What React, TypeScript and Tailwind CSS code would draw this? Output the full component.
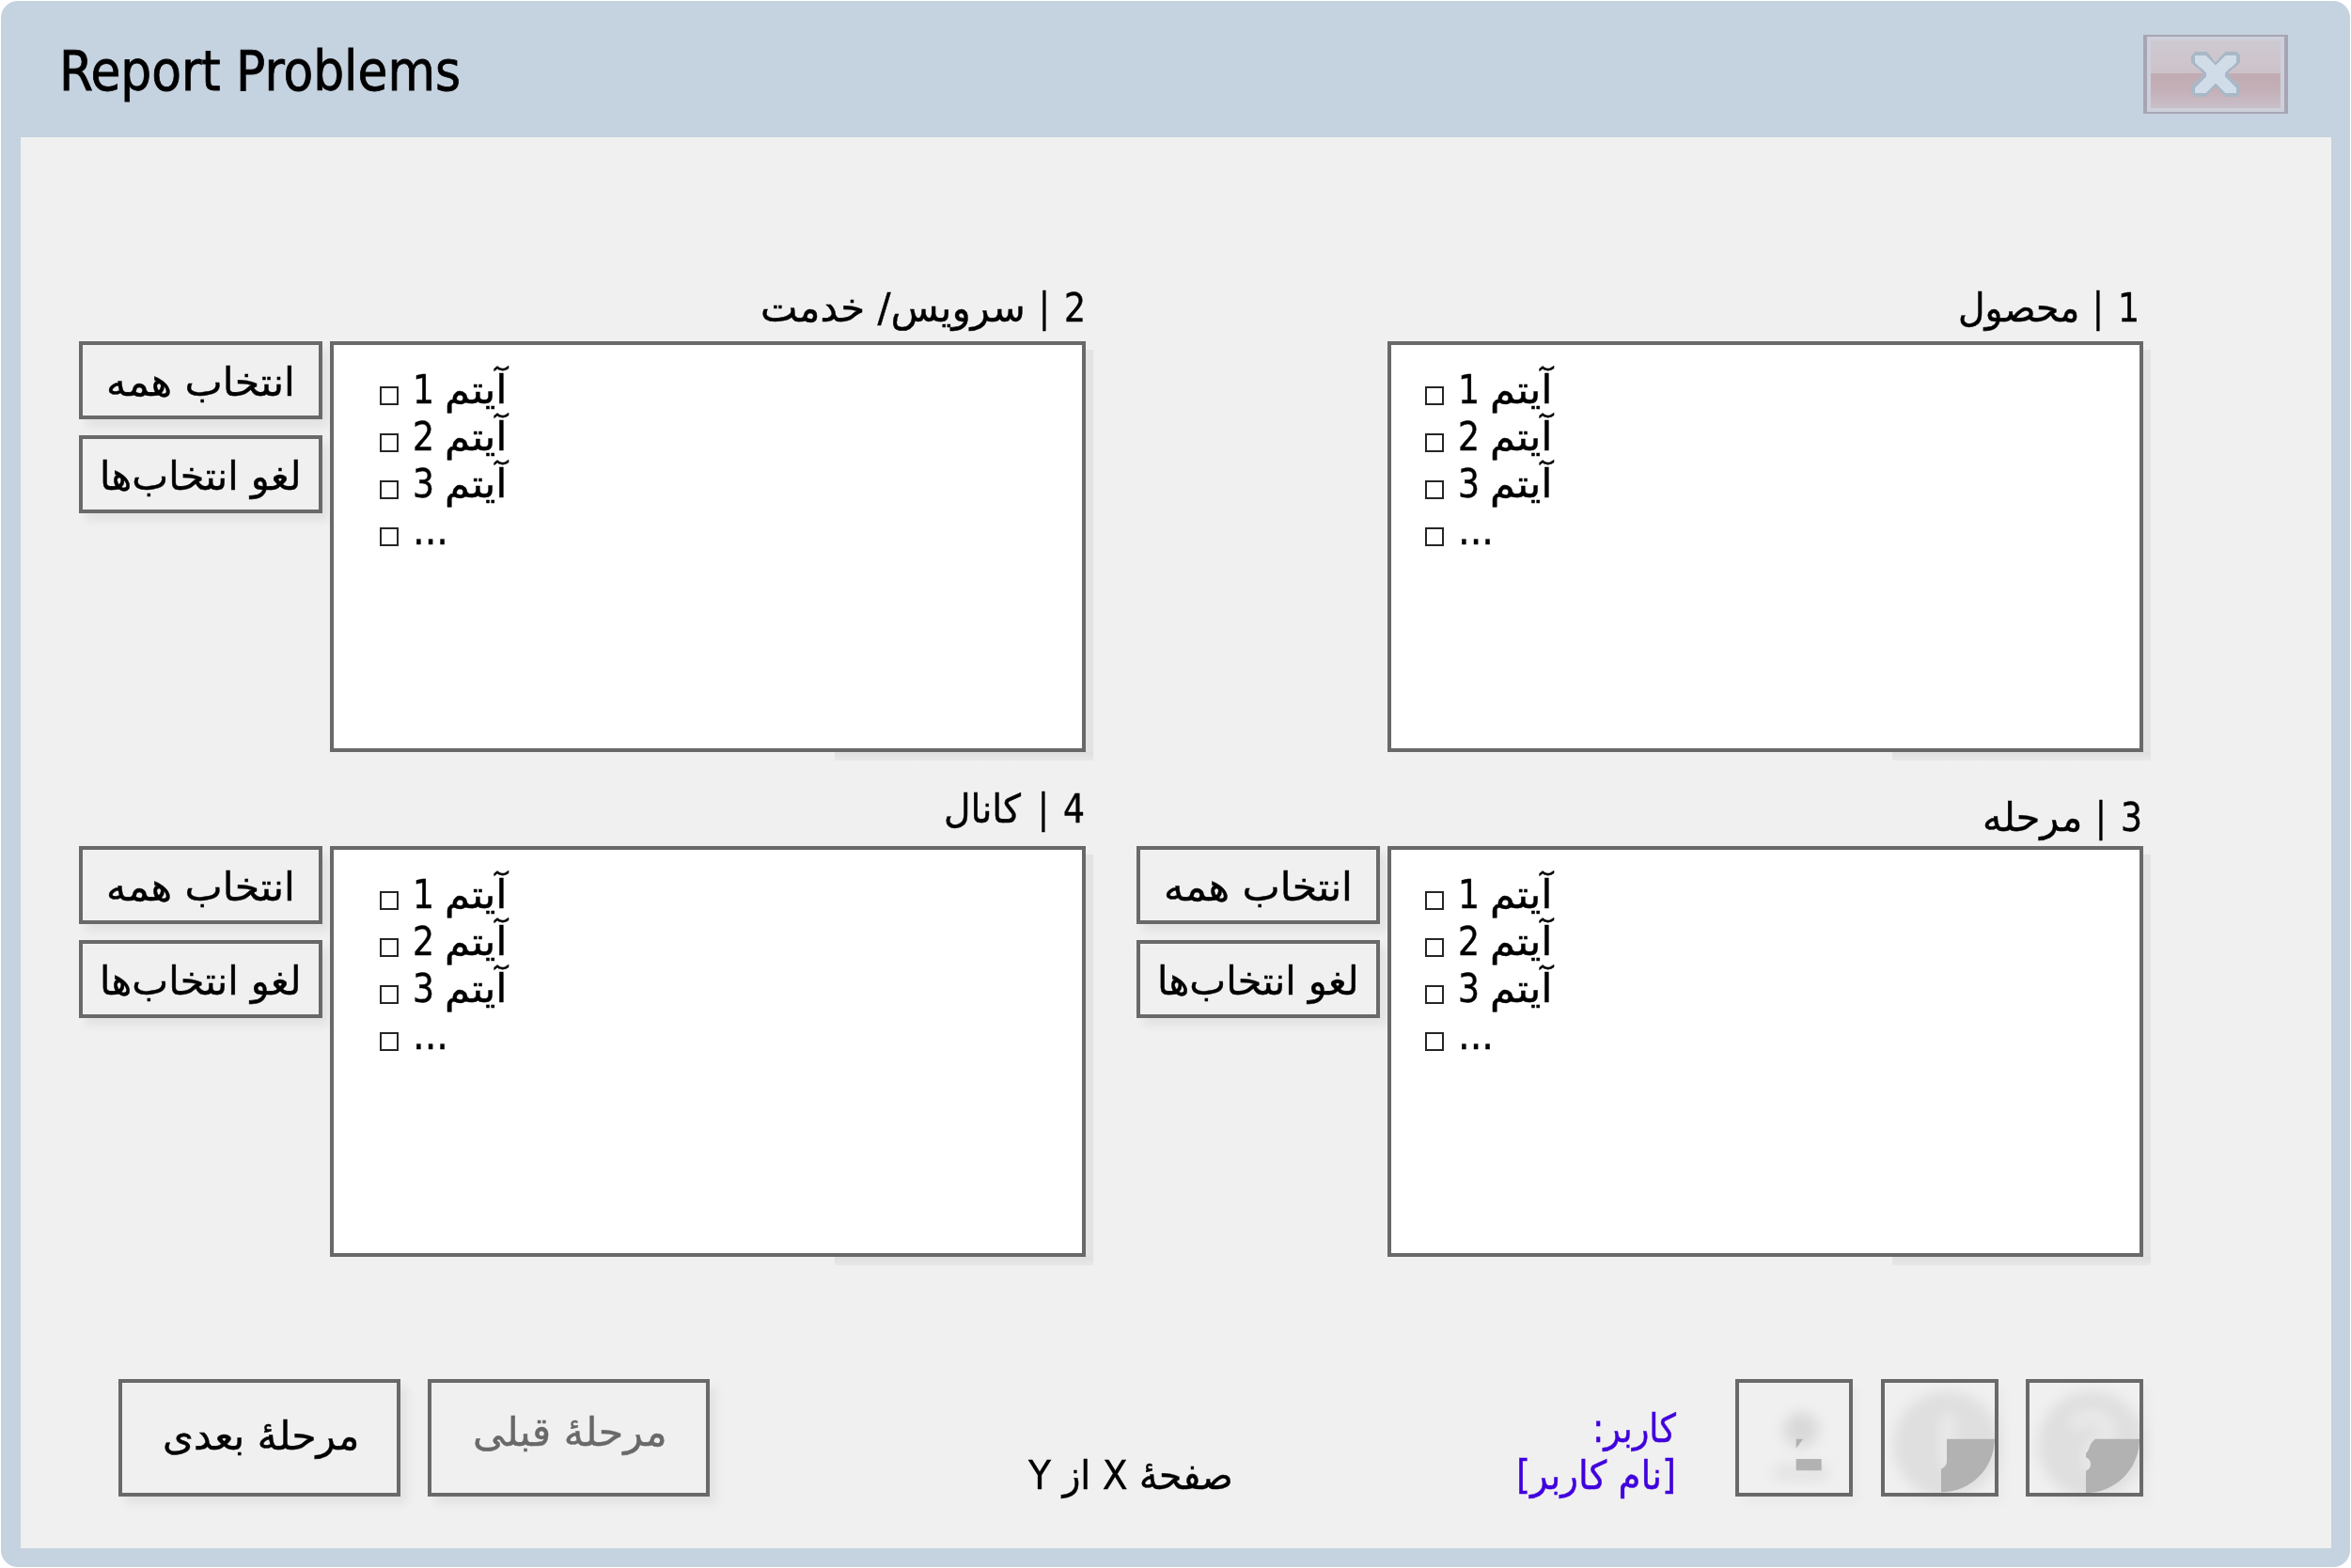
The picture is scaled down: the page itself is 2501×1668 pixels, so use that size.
import { useLayoutEffect, useRef } from "react";
import type { ReactNode } from "react";

/** One line of text, squeezed or stretched horizontally to an exact width. */
function Fit({ width, className = "", dir = "rtl", children }: { width: number; className?: string; dir?: "rtl" | "ltr"; children: ReactNode }) {
  const ref = useRef<HTMLSpanElement>(null);
  useLayoutEffect(() => {
    const el = ref.current;
    if (el) el.style.transform = `scaleX(${width / el.offsetWidth})`;
  }, [width]);
  return (
    <span dir="ltr" className={`block text-left ${className}`} style={{ width }}>
      <span ref={ref} dir={dir} className="inline-block origin-left whitespace-nowrap">
        {children}
      </span>
    </span>
  );
}

const edge = "border-4 border-[#696969]";
const soft = "shadow-[7px_8px_10px_rgba(0,0,0,0.06)]";
const box = "mt-[17px] h-[20px] w-[20px] border-2 border-[#262626]";

function SideButtons() {
  return (
    <div className="mt-[60px] flex w-[259px] flex-col gap-[17px]">
      <button className={`flex h-[83px] justify-center pt-[19px] ${edge} ${soft}`}>
        <Fit width={201}>انتخاب همه</Fit>
      </button>
      <button className={`flex h-[83px] justify-center pt-[19px] ${edge} ${soft}`}>
        <Fit width={215}>لغو انتخاب‌ها</Fit>
      </button>
    </div>
  );
}

type PanelProps = { n: string; title: string; titleWidth: number; labelPad: string; itemPad: string; titleGap?: string; buttons?: boolean };

function Panel({ n, title, titleWidth, labelPad, itemPad, titleGap = "mr-[14px]", buttons = true }: PanelProps) {
  return (
    <section className="flex w-[1071px] gap-2">
      {buttons ? <SideButtons /> : <div className="w-[259px]" />}
      <div className="w-[804px]">
        <div className={`flex h-[60px] justify-end ${labelPad}`}>
          <Fit width={titleWidth} className={titleGap}>{title}</Fit>
          <Fit width={12} className="mr-[15px]">|</Fit>
          <Fit width={23}>{n}</Fit>
        </div>
        <div className={`relative h-[437px] bg-white ${edge}`}>
          <div className="absolute -right-[12px] top-[5px] h-[436px] w-2 bg-[#e3e3e3]" />
          <div className="absolute -bottom-[13px] -right-[12px] h-[9px] w-[275px] bg-gradient-to-b from-[#dfdfdf] to-[#e8e8e8]" />
          <ul className={`pt-[27px] ${itemPad}`}>
            {["1", "2", "3"].map((d) => (
              <li key={d} className="flex h-[50px]">
                <span className={box} />
                <Fit width={23} className="ml-[15px]">{d}</Fit>
                <Fit width={67} className="ml-[11px]">آیتم</Fit>
              </li>
            ))}
            <li className="flex h-[50px]">
              <span className={box} />
              <Fit width={38} dir="ltr" className="ml-[15px]">...</Fit>
            </li>
          </ul>
        </div>
      </div>
    </section>
  );
}

function IconButton({ children, id }: { children: ReactNode; id: string }) {
  return (
    <button className="relative h-[125px] w-[125px] shadow-[7px_8px_10px_rgba(0,0,0,0.025)]">
      <svg viewBox="0 0 125 125" className="block h-[125px] w-[125px] overflow-visible">
        <defs>
          <filter id={id} x="-40%" y="-40%" width="180%" height="180%">
            <feGaussianBlur stdDeviation="7" />
          </filter>
        </defs>
        {children}
      </svg>
      <span className={`absolute inset-0 ${edge}`} />
    </button>
  );
}

function CloseButton() {
  return (
    <button className="h-[84px] w-[154px] border-x-4 border-y-2 border-[#a7a5b4]">
      <span className="flex h-full w-full items-center justify-center border-4 border-[#cdd0da] bg-[linear-gradient(#cec9d1_0%,#cdc2ca_48%,#c2abb2_48%,#c4b0b8_75%,#c9bfc9_100%)]">
        <svg viewBox="0 0 52 48" className="h-12 w-[52px]" shapeRendering="crispEdges">
          <path d="M4 0H16L20 4L26 12L32 4L36 0H48L52 4V12L40 22V26L52 36V44L48 48H36L26 36L16 48H4L0 44V36L12 26V22L0 12V4Z" fill="#a9b8c6" />
          <path d="M4 4H16L26 15L36 4H48V12L36 22V27L48 38V44H36L26 33L16 44H4V38L16 27V22L4 12Z" fill="#d0dce7" />
        </svg>
      </span>
    </button>
  );
}

export default function App() {
  return (
    <div className="h-[1668px] w-[2501px] bg-white p-px font-['DejaVu_Sans_Condensed','DejaVu_Sans',sans-serif] text-[42px] leading-[42px] text-black [-webkit-text-stroke:0.4px_currentColor]">
      <div className="h-full rounded-[18px] bg-[#c5d2df] pl-[21px] pr-5">
        <header className="flex h-[145px] items-start justify-between pl-[41px] pr-[46px]">
          <Fit width={427} dir="ltr" className="mt-[44px] text-[59px] leading-[62px] [-webkit-text-stroke:0.8px_currentColor]">Report Problems</Fit>
          <div className="pt-9">
            <CloseButton />
          </div>
        </header>
        <main className="flex h-[1501px] flex-col bg-[#f0f0f0] pl-[62px] pt-[157px]">
          <div className="flex gap-[54px]">
            <Panel n="2" title="سرویس/ خدمت" titleWidth={282} labelPad="pt-[4px]" itemPad="pl-[49px]" />
            <Panel n="1" title="محصول" titleWidth={129} labelPad="pt-[4px] pr-[4px]" itemPad="pl-[36px]" buttons={false} />
          </div>
          <div className="mt-[40px] flex gap-[54px]">
            <Panel n="4" title="کانال" titleWidth={82} titleGap="mr-[18px]" labelPad="pt-0 pr-px" itemPad="pl-[49px]" />
            <Panel n="3" title="مرحله" titleWidth={106} labelPad="pt-[9px] pr-px" itemPad="pl-[36px]" />
          </div>
          <footer className="mt-[130px] flex pl-[42px]">
            <button className={`flex h-[125px] w-[300px] justify-center pl-[3px] pt-[36px] ${edge} ${soft}`}>
              <Fit width={209}>مرحلۀ بعدی</Fit>
            </button>
            <button className={`ml-[29px] flex h-[125px] w-[300px] justify-center pl-[3px] pt-[32px] text-[#696969] ${edge} ${soft}`}>
              <Fit width={207}>مرحلۀ قبلی</Fit>
            </button>
            <Fit width={218} className="ml-[339px] mt-[82px]">صفحۀ X از Y</Fit>
            <div className="ml-[301px] mt-[32px] flex w-[170px] flex-col items-end gap-2 text-[#4000dd]">
              <Fit width={89}>کاربر:</Fit>
              <Fit width={170}>[نام کاربر]</Fit>
            </div>
            <div className="ml-[63px] flex gap-[29.5px]">
              <IconButton id="blur-user">
                <g filter="url(#blur-user)">
                  <circle cx="70" cy="54" r="19" fill="#d9d9d9" />
                  <rect x="42" y="90" width="57" height="18" fill="#e3e3e3" />
                </g>
                <path d="M64.7 63.7H72.3L64.7 73.7ZM64.7 85H91.7V97.3H64.7Z" fill="#b2b2b2" />
              </IconButton>
              <IconButton id="blur-info">
                <g filter="url(#blur-info)">
                  <circle cx="70" cy="70" r="57" fill="#dfdfdf" />
                  <path d="M71 38V95" stroke="#ebebeb" strokeWidth="14" />
                </g>
                <path d="M70 63.7H120.8A57 57 0 0 1 64 120.5V95.7Q70 93 70 88Z" fill="#b2b2b2" />
              </IconButton>
              <IconButton id="blur-help">
                <g filter="url(#blur-help)">
                  <circle cx="70" cy="70" r="57" fill="#dfdfdf" />
                  <path d="M52 52Q54 40 70 40T88 54Q88 64 76 70T70 84V98" fill="none" stroke="#ebebeb" strokeWidth="13" />
                </g>
                <path d="M74 63.7H121A57 57 0 0 1 64 121V97.7A7.5 7.5 0 0 0 64 83.5V79C69 75 66 70 74 63.7Z" fill="#b2b2b2" />
              </IconButton>
            </div>
          </footer>
        </main>
      </div>
    </div>
  );
}
